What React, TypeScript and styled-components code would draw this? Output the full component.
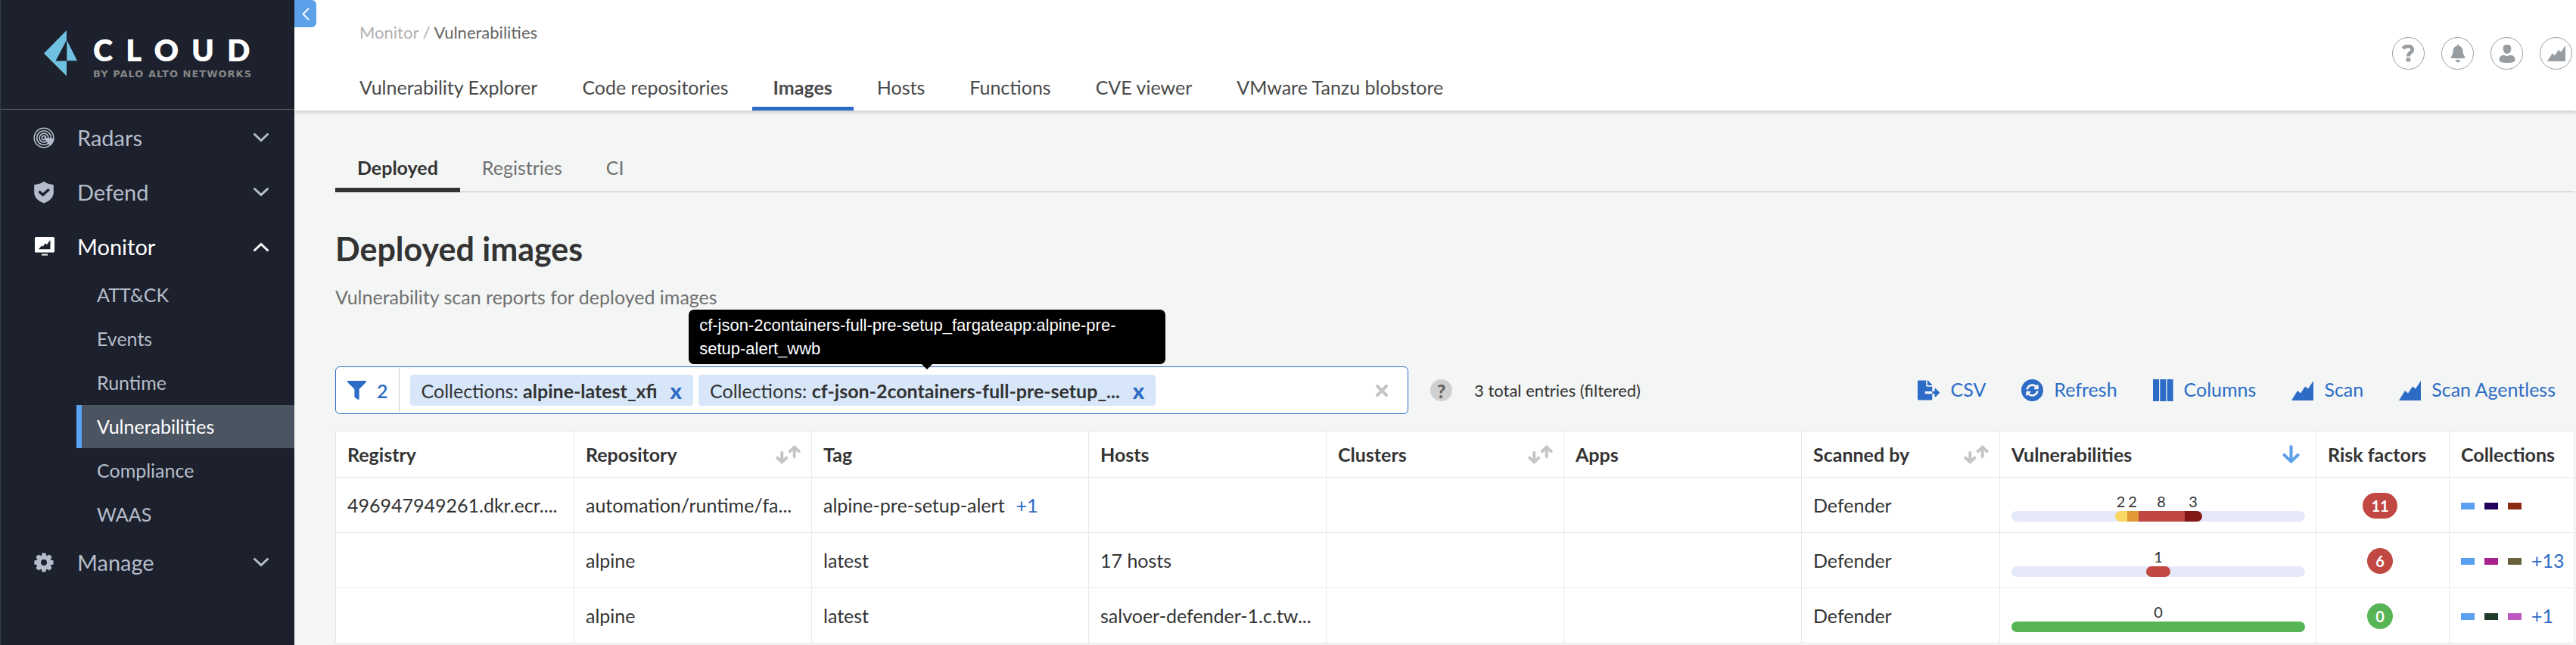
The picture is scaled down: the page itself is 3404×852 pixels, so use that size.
import React from "react";
import styled, { createGlobalStyle } from "styled-components";
import { FaFileExport, FaFilter, FaSyncAlt } from "react-icons/fa";

const GlobalStyle = createGlobalStyle`
  *, *::before, *::after { box-sizing: border-box; }
  body {
    margin: 0;
    background: #f4f6f5;
    color: #333333;
    font-family: Lato, "Noto Sans", sans-serif;
    font-size: 25px;
    line-height: 32px;
  }
  button, input { font: inherit; color: inherit; border: 0; padding: 0; margin: 0; background: none; }
  button { cursor: pointer; }
  a { color: inherit; text-decoration: none; }
  ul { list-style: none; margin: 0; padding: 0; }
  svg { display: block; flex: none; }
`;

const Page = styled.div`
  display: flex;
  min-height: 100vh;
`;

/* Sidebar */

const Sidebar = styled.aside`
  flex: 0 0 389px;
  background: #1c212d;
  border-left: 1px solid #343b49;
  color: #b6bdca;
`;

const Brand = styled.a`
  display: flex;
  gap: 21px;
  height: 145px;
  padding: 40px 0 0 57px;
  border-bottom: 1px solid #555c66;
`;

const BrandText = styled.span`
  display: flex;
  flex-direction: column;
  gap: 4px;
  padding-top: 6px;
  white-space: nowrap;
`;

const BrandName = styled.span`
  color: #ffffff;
  font-size: 40px;
  font-weight: 800;
  line-height: 40px;
  letter-spacing: 17px;
`;

const BrandOwner = styled.span`
  color: #868686;
  font-family: "DejaVu Sans", sans-serif;
  font-size: 13px;
  font-weight: 700;
  line-height: 16px;
  letter-spacing: 1px;
`;

const SideNav = styled.nav`
  padding-top: 1px;
`;

const NavButton = styled.button<{ $open?: boolean }>`
  display: flex;
  align-items: center;
  width: 100%;
  height: 72px;
  padding: 0 34px 0 42px;
  color: ${(p) => (p.$open ? "#ffffff" : "#b6bdca")};
  font-size: 29px;
  text-align: left;
`;

const NavLabel = styled.span`
  flex: 1;
  margin-left: 29px;
`;

const SubList = styled.ul`
  display: flex;
  flex-direction: column;
  gap: 1px;
  margin: -1px 0 -1px 100px;
`;

const SubLink = styled.a<{ $active?: boolean }>`
  display: flex;
  align-items: center;
  height: 57px;
  padding: 0 0 2px 20px;
  border-left: 7px solid ${(p) => (p.$active ? "#5ba3f5" : "transparent")};
  background: ${(p) => (p.$active ? "#4b5562" : "transparent")};
  color: ${(p) => (p.$active ? "#ffffff" : "#b6bdca")};
`;

/* Header */

const Content = styled.div`
  flex: 1;
  min-width: 0;
`;

const Header = styled.header`
  position: relative;
  display: flex;
  align-items: center;
  justify-content: space-between;
  padding: 0 5px 0 58px;
  background: #ffffff;
  box-shadow: 0 2px 6px rgba(0, 0, 0, 0.2);
`;

const CollapseButton = styled.button`
  position: absolute;
  top: 0;
  left: 0;
  display: flex;
  align-items: center;
  justify-content: center;
  width: 29px;
  height: 36px;
  border-radius: 0 6px 6px 0;
  background: #5ca0ea;
`;

const HeaderMain = styled.div`
  padding-top: 30px;
`;

const Breadcrumb = styled.nav`
  margin: 0 0 32px 28px;
  color: #b0b0b0;
  font-size: 22px;
  line-height: 26px;
`;

const Current = styled.span`
  color: #666666;
`;

const Tabs = styled.nav`
  display: flex;
  gap: 3px;
`;

const Tab = styled.a<{ $active?: boolean }>`
  display: flex;
  align-items: center;
  height: 58px;
  padding: 0 28px;
  border-bottom: 5px solid ${(p) => (p.$active ? "#2d6cc6" : "transparent")};
  color: #4a4a4a;
  font-weight: ${(p) => (p.$active ? 700 : 400)};
  white-space: nowrap;
`;

const HeaderTools = styled.div`
  display: flex;
  gap: 22px;
  padding-bottom: 5px;
`;

const RoundButton = styled.button`
  display: flex;
  align-items: center;
  justify-content: center;
  width: 43px;
  height: 43px;
  border: 1px solid #979da1;
  border-radius: 50%;
  color: #979da1;
`;

/* Main area */

const Main = styled.main`
  padding: 48px 2px 0 54px;
`;

const SubTabs = styled.nav`
  display: flex;
  border-bottom: 1px solid #bfc3c3;
`;

const SubTab = styled.a<{ $active?: boolean }>`
  display: flex;
  align-items: center;
  height: 60px;
  margin-bottom: -1px;
  padding: 0 29px;
  border-bottom: 6px solid ${(p) => (p.$active ? "#333333" : "transparent")};
  color: ${(p) => (p.$active ? "#333333" : "#707070")};
  font-weight: ${(p) => (p.$active ? 700 : 400)};
`;

const Title = styled.h1`
  margin: 49px 0 21px;
  font-size: 43px;
  font-weight: 700;
  line-height: 52px;
`;

const Subtitle = styled.p`
  margin: 0;
  color: #707070;
`;

const Toolbar = styled.div`
  display: flex;
  align-items: center;
  margin: 76px 0 22px;
`;

const FilterBox = styled.div`
  display: flex;
  align-items: center;
  gap: 7px;
  flex: 0 1 1418px;
  min-width: 0;
  height: 63px;
  padding-right: 26px;
  border: 1px solid #2d6cc6;
  border-radius: 6px;
  background: #ffffff;
`;

const FilterCount = styled.div`
  display: flex;
  align-items: center;
  gap: 14px;
  height: 59px;
  margin-right: 7px;
  padding: 0 14px 0 15px;
  border-right: 1px solid #cccccc;
  color: #2d6cc6;
  font-weight: 600;
`;

const Chip = styled.div`
  position: relative;
  display: flex;
  align-items: center;
  gap: 17px;
  height: 41px;
  padding: 0 15px;
  border-radius: 4px;
  background: #d7e7f9;
  white-space: nowrap;
`;

const ChipRemove = styled.button`
  color: #2d6cc6;
  font-size: 29px;
  font-weight: 900;
`;

const Tooltip = styled.div`
  position: absolute;
  bottom: 55px;
  left: 50%;
  width: 630px;
  margin-left: -315px;
  padding: 5px 14px;
  border-radius: 7px;
  background: #000000;
  color: #ffffff;
  font-family: "Liberation Sans", sans-serif;
  font-size: 22px;
  line-height: 31px;
  white-space: normal;

  &::after {
    content: "";
    position: absolute;
    top: 100%;
    left: 50%;
    margin-left: -7px;
    border: 7px solid transparent;
    border-top-color: #000000;
    border-bottom: 0;
  }
`;

const FilterInput = styled.input`
  flex: 1;
  min-width: 0;
  height: 41px;
  outline: none;
`;

const HelpButton = styled.button`
  display: flex;
  align-items: center;
  justify-content: center;
  width: 29px;
  height: 29px;
  margin: 0 29px;
  border-radius: 50%;
  background: #d0d0d0;
  color: #666666;
  font-weight: 900;
`;

const EntryCount = styled.span`
  flex: 1;
  font-size: 22px;
`;

const Actions = styled.div`
  display: flex;
  gap: 47px;
  padding-right: 25px;
`;

const ActionButton = styled.button`
  display: flex;
  align-items: center;
  gap: 14px;
  color: #2d6cc6;
  white-space: nowrap;
`;

const ActionLabel = styled.span`
  padding-bottom: 4px;
`;

/* Table */

const Table = styled.table`
  width: 100%;
  table-layout: fixed;
  border: 1px solid #e6e8e8;
  border-bottom: 0;
  border-collapse: separate;
  border-spacing: 0;
  background: #ffffff;
`;

const HeadCell = styled.th`
  height: 61px;
  padding: 0 14px 0 15px;
  border: solid #e8e8e8;
  border-width: 0 1px 1px 0;
  text-align: left;
  white-space: nowrap;
  &:last-child { border-right: 0; }
`;

const HeadInner = styled.div`
  display: flex;
  align-items: center;
  justify-content: space-between;
`;

const SortButton = styled.button<{ $active?: boolean }>`
  margin-right: ${(p) => (p.$active ? 7 : 0)}px;
  color: ${(p) => (p.$active ? "#5ca0ea" : "#c6c6c6")};
`;

const Cell = styled.td`
  height: 73px;
  padding: 0 14px 0 15px;
  border: solid #e8e8e8;
  border-width: 0 1px 1px 0;
  white-space: nowrap;
  &:last-child { border-right: 0; }
`;

const MoreLink = styled.a`
  margin-left: 15px;
  color: #2d6cc6;
`;

const Labels = styled.div`
  display: flex;
  justify-content: center;
  padding-top: 4px;
  font-size: 20px;
  line-height: 24px;
  text-align: center;
`;

const Label = styled.span<{ $width: number }>`
  width: ${(p) => p.$width}px;
`;

const Track = styled.div<{ $clean?: boolean }>`
  display: flex;
  justify-content: center;
  height: 14px;
  margin: 1px 0 0;
  border-radius: 7px;
  background: ${(p) => (p.$clean ? "#57b555" : "#e5e9fa")};
`;

const Segment = styled.span<{ $width: number; $color: string }>`
  width: ${(p) => p.$width}px;
  background: ${(p) => p.$color};
  &:first-child { border-top-left-radius: 7px; border-bottom-left-radius: 7px; }
  &:last-child { border-top-right-radius: 7px; border-bottom-right-radius: 7px; }
`;

const RiskCell = styled(Cell)`
  padding-right: 22px;
  text-align: center;
`;

const Badge = styled.span<{ $clean?: boolean }>`
  display: inline-block;
  min-width: 34px;
  padding: 0 11px;
  border-radius: 17px;
  background: ${(p) => (p.$clean ? "#57b555" : "#c14742")};
  color: #ffffff;
  font-size: 20px;
  font-weight: 700;
  line-height: 34px;
`;

const Swatches = styled.div`
  display: flex;
  align-items: center;
  gap: 13px;
`;

const Swatch = styled.span<{ $color: string }>`
  flex: none;
  width: 18px;
  height: 9px;
  margin-top: 3px;
  background: ${(p) => p.$color};
`;

const SwatchMore = styled.a`
  color: #2d6cc6;
`;

/* Icons */

const LogoMark = () => (
  <svg width="44" height="61" viewBox="0 0 44 61" fill="#6fc1df" aria-hidden="true">
    <path d="M30 0 0 30.5 30 60.5V40.5H15.5L30 13Z" />
    <path d="M30.3 13 44 40.2H30.3Z" />
  </svg>
);

const RadarIcon = () => (
  <svg width="30" height="30" viewBox="0 0 30 30" fill="none" stroke="currentColor" strokeWidth="1.6" aria-hidden="true">
    <circle cx="15" cy="15" r="12.8" />
    <circle cx="15" cy="15" r="9.3" />
    <circle cx="15" cy="15" r="5.9" />
    <circle cx="15" cy="15" r="2.6" />
    <path d="M14.500 14.500 28.500 16A13.500 13.500 0 0 1 23 25.600Z" fill="currentColor" stroke="none" />
  </svg>
);

const ShieldIcon = () => (
  <svg width="30" height="30" viewBox="0 0 30 30" aria-hidden="true">
    <path d="M15 .6C11.500 3.600 7 4.800 2.200 5V15c0 7 5.300 11.800 12.800 14.400C22.500 26.800 27.800 22 27.800 15V5C23 4.800 18.500 3.600 15 .6Z" fill="currentColor" />
    <path d="M8.600 13.800 13.600 18.400 21.800 11" fill="none" stroke="#1c212d" strokeWidth="3.400" />
  </svg>
);

const MonitorIcon = () => (
  <svg width="30" height="30" viewBox="0 0 30 30" fill="currentColor" aria-hidden="true">
    <rect x="3" y="2" width="26" height="20.500" rx="1.500" />
    <path d="M8 18.200 12 13.500 14 14.500 16.500 10.500 19 12 23.500 6V18.200Z" fill="#1c212d" />
    <rect x="12" y="24.500" width="8" height="2" />
  </svg>
);

const GearIcon = () => (
  <svg width="30" height="30" viewBox="-15 -15 30 30" fill="currentColor" aria-hidden="true">
    <circle r="6.800" fill="none" stroke="currentColor" strokeWidth="5.600" />
    {[0, 45, 90, 135, 180, 225, 270, 315].map((angle) => (
      <path key={angle} d="M-3.400-8.500-2.400-12.600H2.400L3.400-8.500Z" transform={`rotate(${angle})`} />
    ))}
  </svg>
);

const Chevron = ({ up }: { up?: boolean }) => (
  <svg width="20" height="12" viewBox="0 0 20 12" fill="none" stroke="currentColor" strokeWidth="3" aria-hidden="true">
    <path d={up ? "M1.500 10.500 10 2.500 18.500 10.500" : "M1.500 1.500 10 9.500 18.500 1.500"} strokeLinecap="round" />
  </svg>
);

const CollapseIcon = () => (
  <svg width="10" height="17" viewBox="0 0 10 17" fill="none" stroke="#ffffff" strokeWidth="1.800" aria-hidden="true">
    <path d="M9 1 1.500 8.500 9 16" />
  </svg>
);

const QuestionIcon = () => (
  <svg width="17" height="23" viewBox="0 0 17 23" aria-hidden="true">
    <path d="M1.300 5.200C3.800 1.300 13.800.6 13.800 6.700 13.800 10.600 8.400 10.400 8.400 15.400" fill="none" stroke="currentColor" strokeWidth="4.800" />
    <rect x="5.600" y="17.400" width="5.600" height="5" fill="currentColor" />
  </svg>
);

const BellIcon = () => (
  <svg width="20" height="24" viewBox="0 0 20 24" fill="currentColor" aria-hidden="true">
    <path d="M10 0C9.200 0 8.700.6 8.700 1.500 5 2.300 3.700 5 3.500 8.500 3.300 12.500 2.200 14.500 0 17.200 6 18.500 14 18.500 20 17.200 17.800 14.500 16.700 12.500 16.500 8.500 16.300 5 15 2.300 11.300 1.500 11.300.6 10.800 0 10 0Z" />
    <path d="M7 20H13C13 24.600 7 24.600 7 20Z" />
  </svg>
);

const PersonIcon = () => (
  <svg width="22" height="24" viewBox="0 0 22 24" fill="currentColor" aria-hidden="true">
    <path d="M11 0C14.500 0 16.300 1.500 16.300 5.300 16.300 9.500 14 12 11 12S5.700 9.500 5.700 5.300C5.700 1.500 7.500 0 11 0Z" />
    <path d="M5 14C7.500 13.200 8.500 15 11 15S14.500 13.200 17 14C20 14.500 21.500 16.500 21.500 20 21.500 23 17 24 11 24S.5 23 .5 20C.5 16.500 2 14.500 5 14Z" />
  </svg>
);

const ChartIcon = ({ width, height }: { width: number; height: number }) => (
  <svg width={width} height={height} viewBox="0 0 29 26" preserveAspectRatio="none" fill="currentColor" aria-hidden="true">
    <path d="M0 26 8 13 12 16.500 18 7.500 22 10.500 29 0V26Z" />
  </svg>
);

const ClearIcon = () => (
  <svg width="16" height="16" viewBox="0 0 16 16" stroke="#c4c4c4" strokeWidth="4" aria-hidden="true">
    <path d="M2 2 14 14M14 2 2 14" strokeLinecap="round" />
  </svg>
);

const RefreshIcon = () => (
  <svg width="29" height="29" viewBox="0 0 29 29" aria-hidden="true">
    <circle cx="14.500" cy="14.500" r="14.500" fill="currentColor" />
    <FaSyncAlt x={6} y={6} size={17} color="#f4f6f5" />
  </svg>
);

const ColumnsIcon = () => (
  <svg width="27" height="29" viewBox="0 0 27 29" fill="currentColor" aria-hidden="true">
    <path d="M0 0H8V29H0ZM9.300 0H17.300V29H9.300ZM18.600 0H26.600V29H18.600Z" />
  </svg>
);

const SortIcon = () => (
  <svg width="33" height="25" viewBox="0 0 33 25" fill="none" stroke="currentColor" strokeWidth="4" strokeLinecap="round" aria-hidden="true">
    <path d="M8.300 10V22M2.300 16.800 8.300 22.400 14.300 16.800" />
    <path d="M24.700 15V3M18.700 8.200 24.700 2.600 30.700 8.200" />
  </svg>
);

const SortedIcon = () => (
  <svg width="23" height="24" viewBox="0 0 23 24" fill="none" stroke="currentColor" strokeWidth="4" strokeLinecap="round" aria-hidden="true">
    <path d="M11.500 2V21M2.500 13 11.500 21.600 20.500 13" />
  </svg>
);

/* Data */

const monitorPages = ["ATT&CK", "Events", "Runtime", "Vulnerabilities", "Compliance", "WAAS"];
const sections = ["Vulnerability Explorer", "Code repositories", "Images", "Hosts", "Functions", "CVE viewer", "VMware Tanzu blobstore"];
const imageTabs = ["Deployed", "Registries", "CI"];

const columns: { title: string; width: number; sort?: "none" | "down" }[] = [
  { title: "Registry", width: 315 },
  { title: "Repository", width: 314, sort: "none" },
  { title: "Tag", width: 366 },
  { title: "Hosts", width: 314 },
  { title: "Clusters", width: 314, sort: "none" },
  { title: "Apps", width: 314 },
  { title: "Scanned by", width: 262, sort: "none" },
  { title: "Vulnerabilities", width: 418, sort: "down" },
  { title: "Risk factors", width: 176 },
  { title: "Collections", width: 164 },
];

type Severity = { count: number; width: number; color: string };

const rows: {
  registry: string;
  repository: string;
  tag: string;
  moreTags?: string;
  hosts: string;
  severities: Severity[];
  risk: number;
  swatches: string[];
  more?: string;
}[] = [
  {
    registry: "496947949261.dkr.ecr....",
    repository: "automation/runtime/fa...",
    tag: "alpine-pre-setup-alert",
    moreTags: "+1",
    hosts: "",
    severities: [
      { count: 2, width: 16, color: "#f8d862" },
      { count: 2, width: 15, color: "#e39a36" },
      { count: 8, width: 61, color: "#c14742" },
      { count: 3, width: 23, color: "#831716" },
    ],
    risk: 11,
    swatches: ["#5b9ff0", "#21005b", "#8c2b14"],
  },
  {
    registry: "",
    repository: "alpine",
    tag: "latest",
    hosts: "17 hosts",
    severities: [{ count: 1, width: 32, color: "#c14742" }],
    risk: 6,
    swatches: ["#5b9ff0", "#a7228c", "#68613c"],
    more: "+13",
  },
  {
    registry: "",
    repository: "alpine",
    tag: "latest",
    hosts: "salvoer-defender-1.c.tw...",
    severities: [],
    risk: 0,
    swatches: ["#5b9ff0", "#1e3b28", "#bd56c0"],
    more: "+1",
  },
];

const SeverityBar = ({ severities }: { severities: Severity[] }) => (
  <>
    <Labels>
      {severities.length === 0 && <Label $width={32}>0</Label>}
      {severities.map((s, i) => (
        <Label key={i} $width={s.width}>{s.count}</Label>
      ))}
    </Labels>
    <Track $clean={severities.length === 0}>
      {severities.map((s, i) => (
        <Segment key={i} $width={s.width} $color={s.color} />
      ))}
    </Track>
  </>
);

const Action = ({ icon, label }: { icon: React.ReactNode; label: string }) => (
  <ActionButton>
    {icon}
    <ActionLabel>{label}</ActionLabel>
  </ActionButton>
);

export default function App() {
  return (
    <Page>
      <GlobalStyle />
      <Sidebar>
        <Brand href="#">
          <LogoMark />
          <BrandText>
            <BrandName>CLOUD</BrandName>
            <BrandOwner>BY PALO ALTO NETWORKS</BrandOwner>
          </BrandText>
        </Brand>
        <SideNav aria-label="Primary">
          <NavButton><RadarIcon /><NavLabel>Radars</NavLabel><Chevron /></NavButton>
          <NavButton><ShieldIcon /><NavLabel>Defend</NavLabel><Chevron /></NavButton>
          <NavButton $open aria-expanded="true"><MonitorIcon /><NavLabel>Monitor</NavLabel><Chevron up /></NavButton>
          <SubList>
            {monitorPages.map((page) => (
              <li key={page}>
                <SubLink href="#" $active={page === "Vulnerabilities"}>{page}</SubLink>
              </li>
            ))}
          </SubList>
          <NavButton><GearIcon /><NavLabel>Manage</NavLabel><Chevron /></NavButton>
        </SideNav>
      </Sidebar>

      <Content>
        <Header>
          <CollapseButton aria-label="Collapse sidebar"><CollapseIcon /></CollapseButton>
          <HeaderMain>
            <Breadcrumb aria-label="Breadcrumb">
              <a href="#">Monitor</a> / <Current>Vulnerabilities</Current>
            </Breadcrumb>
            <Tabs>
              {sections.map((name) => (
                <Tab key={name} href="#" $active={name === "Images"}>{name}</Tab>
              ))}
            </Tabs>
          </HeaderMain>
          <HeaderTools>
            <RoundButton aria-label="Help"><QuestionIcon /></RoundButton>
            <RoundButton aria-label="Notifications"><BellIcon /></RoundButton>
            <RoundButton aria-label="Account"><PersonIcon /></RoundButton>
            <RoundButton aria-label="Statistics"><ChartIcon width={24} height={21} /></RoundButton>
          </HeaderTools>
        </Header>

        <Main>
          <SubTabs>
            {imageTabs.map((name) => (
              <SubTab key={name} href="#" $active={name === "Deployed"}>{name}</SubTab>
            ))}
          </SubTabs>
          <Title>Deployed images</Title>
          <Subtitle>Vulnerability scan reports for deployed images</Subtitle>

          <Toolbar>
            <FilterBox>
              <FilterCount><FaFilter size={25} aria-hidden="true" />2</FilterCount>
              <Chip>
                <span>Collections: <b>alpine-latest_xfi</b></span>
                <ChipRemove aria-label="Remove filter">x</ChipRemove>
              </Chip>
              <Chip>
                <span>Collections: <b>cf-json-2containers-full-pre-setup_...</b></span>
                <ChipRemove aria-label="Remove filter">x</ChipRemove>
                <Tooltip role="tooltip">cf-json-2containers-full-pre-setup_fargateapp:alpine-pre-setup-alert_wwb</Tooltip>
              </Chip>
              <FilterInput aria-label="Filter images" />
              <button aria-label="Clear filters"><ClearIcon /></button>
            </FilterBox>
            <HelpButton aria-label="Filter help">?</HelpButton>
            <EntryCount>3 total entries (filtered)</EntryCount>
            <Actions>
              <Action icon={<FaFileExport size={29} aria-hidden="true" />} label="CSV" />
              <Action icon={<RefreshIcon />} label="Refresh" />
              <Action icon={<ColumnsIcon />} label="Columns" />
              <Action icon={<ChartIcon width={29} height={26} />} label="Scan" />
              <Action icon={<ChartIcon width={29} height={26} />} label="Scan Agentless" />
            </Actions>
          </Toolbar>

          <Table>
            <colgroup>
              {columns.map((c) => (
                <col key={c.title} width={c.width} />
              ))}
            </colgroup>
            <thead>
              <tr>
                {columns.map((c) => (
                  <HeadCell key={c.title} scope="col">
                    <HeadInner>
                      {c.title}
                      {c.sort === "none" && <SortButton aria-label={`Sort by ${c.title}`}><SortIcon /></SortButton>}
                      {c.sort === "down" && <SortButton $active aria-label={`Sort by ${c.title}`}><SortedIcon /></SortButton>}
                    </HeadInner>
                  </HeadCell>
                ))}
              </tr>
            </thead>
            <tbody>
              {rows.map((r, i) => (
                <tr key={i}>
                  <Cell>{r.registry}</Cell>
                  <Cell>{r.repository}</Cell>
                  <Cell>
                    {r.tag}
                    {r.moreTags && <MoreLink href="#">{r.moreTags}</MoreLink>}
                  </Cell>
                  <Cell>{r.hosts}</Cell>
                  <Cell />
                  <Cell />
                  <Cell>Defender</Cell>
                  <Cell><SeverityBar severities={r.severities} /></Cell>
                  <RiskCell><Badge $clean={r.risk === 0}>{r.risk}</Badge></RiskCell>
                  <Cell>
                    <Swatches>
                      {r.swatches.map((color) => (
                        <Swatch key={color} $color={color} />
                      ))}
                      {r.more && <SwatchMore href="#">{r.more}</SwatchMore>}
                    </Swatches>
                  </Cell>
                </tr>
              ))}
            </tbody>
          </Table>
        </Main>
      </Content>
    </Page>
  );
}
